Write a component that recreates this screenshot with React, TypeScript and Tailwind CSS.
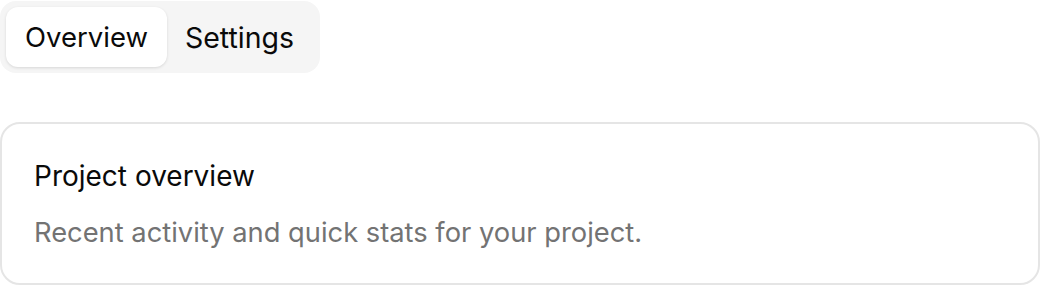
import React, { useState } from 'react'

type Tab = 'overview' | 'settings'

export default function App(): React.JSX.Element {
  const [tab, setTab] = useState<Tab>('overview')

  return (
    <div className="flex flex-col gap-[49px] bg-white" style={{ fontFamily: 'Inter, "Noto Sans", sans-serif' }}>
      {/* Tab list */}
      <div className="mt-[1px] flex h-[72px] w-fit items-center rounded-[16px] bg-[#f5f5f5] p-[6px]">
        <button
          onClick={() => setTab('overview')}
          className={`h-full rounded-[12px] px-[19px] pt-[2px] text-[27.5px] font-normal text-[#0a0a0a] ${
            tab === 'overview' ? 'bg-white shadow-[0_1px_3px_rgba(0,0,0,0.12)]' : ''
          }`}
        >
          Overview
        </button>
        <button
          onClick={() => setTab('settings')}
          className={`h-full rounded-[12px] pl-[18px] pr-[20px] pt-[2px] text-[28.5px] font-normal text-[#0a0a0a] ${
            tab === 'settings' ? 'bg-white shadow-[0_1px_3px_rgba(0,0,0,0.12)]' : ''
          }`}
        >
          Settings
        </button>
      </div>

      {/* Card */}
      <div className="flex h-[163px] w-[1040px] flex-col gap-[17px] rounded-[20px] border-2 border-[#e5e5e5] px-[32px] pt-[32px]">
        <h3 className="text-[28px] font-normal leading-[40px] text-[#0a0a0a]">Project overview</h3>
        <p className="text-[27.3px] leading-[40px] text-[#737373]">
          Recent activity and quick stats for your project.
        </p>
      </div>
    </div>
  )
}
